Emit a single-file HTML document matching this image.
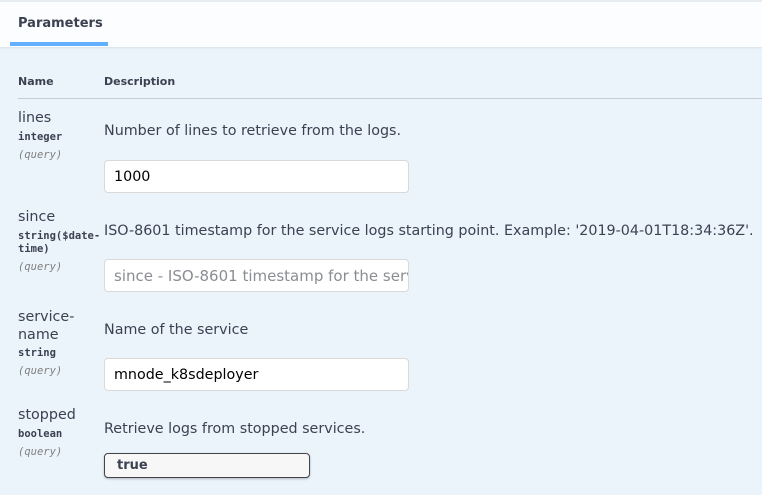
<!DOCTYPE html>
<html><head><meta charset="utf-8"><style>
*{margin:0;padding:0;box-sizing:border-box}
body{width:762px;height:495px;overflow:hidden;background:#ebf3fb;font-family:"DejaVu Sans","Liberation Sans",sans-serif;color:#3b4151;position:relative}
.a{position:absolute;white-space:nowrap}
.hdr{position:absolute;left:0;top:2px;width:762px;height:45px;background:#fcfdfe;box-shadow:0 1px 2px rgba(0,0,0,.08)}
.top{position:absolute;left:0;top:0;width:762px;height:2px;background:#e8edf2}
.tab{left:18px;top:16px;font-size:13px;font-weight:bold}
.bar{position:absolute;left:10px;top:42px;width:98px;height:4px;background:#61affe}
.th{font-size:11px;font-weight:bold;top:75px}
.line{position:absolute;left:18px;top:98px;width:744px;height:1px;background:#c5ccd6}
.nm{font-size:14.3px;left:18px}
.ty{font-family:"DejaVu Sans Mono","Liberation Mono",monospace;font-size:10.5px;font-weight:bold;left:18px;line-height:13px}
.q{font-family:"DejaVu Sans Mono","Liberation Mono",monospace;font-size:10.5px;font-style:italic;color:#808080;left:18px}
.d{font-size:14.3px;left:104px}
.in{position:absolute;left:104px;width:305px;height:33px;background:#fff;border:1px solid #d9d9d9;border-radius:4px;font-size:14.3px;padding:8px 9px;white-space:nowrap;overflow:hidden;color:#000}
.sel{position:absolute;left:104px;top:453px;width:206px;height:25px;background:#f7f7f7;border:1px solid #41444e;border-radius:4px;font-size:13px;font-weight:bold;padding:4px 12px;box-shadow:0 1px 2px rgba(0,0,0,.25)}
</style></head><body>
<div class="top"></div>
<div class="hdr"></div>
<div class="a tab">Parameters</div>
<div class="bar"></div>
<div class="a th" style="left:18px">Name</div>
<div class="a th" style="left:104px">Description</div>
<div class="line"></div>

<div class="a nm" style="top:110px">lines</div>
<div class="a ty" style="top:131px">integer</div>
<div class="a q" style="top:149px">(query)</div>
<div class="a d" style="top:123px">Number of lines to retrieve from the logs.</div>
<div class="in" style="top:160px">1000</div>

<div class="a nm" style="top:209px">since</div>
<div class="a ty" style="top:230px">string($date-<br>time)</div>
<div class="a q" style="top:261px">(query)</div>
<div class="a d" style="top:223px">ISO-8601 timestamp for the service logs starting point. Example: '2019-04-01T18:34:36Z'.</div>
<div class="in" style="top:259px;color:#8a8d93;font-size:15px;padding-top:7px">since - ISO-8601 timestamp for the service logs starting point</div>

<div class="a nm" style="top:308px;line-height:18px">service-<br>name</div>
<div class="a ty" style="top:347px">string</div>
<div class="a q" style="top:365px">(query)</div>
<div class="a d" style="top:322px">Name of the service</div>
<div class="in" style="top:358px">mnode_k8sdeployer</div>

<div class="a nm" style="top:407px">stopped</div>
<div class="a ty" style="top:428px">boolean</div>
<div class="a q" style="top:446px">(query)</div>
<div class="a d" style="top:421px">Retrieve logs from stopped services.</div>
<div class="sel">true</div>
</body></html>
